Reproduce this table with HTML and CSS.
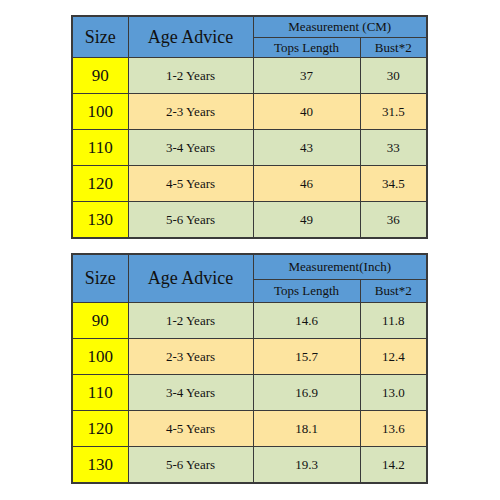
FILE: index.html
```html
<!DOCTYPE html>
<html lang="en">
  <head>
    <meta charset="UTF-8" />
    <title>Size Chart</title>
    <link rel="stylesheet" href="styles.css">
  </head>
  <body>
    <div class="container">
      <table class="chart cm">
        <colgroup>
          <col class="c-size"><col class="c-age"><col class="c-tops"><col class="c-bust">
        </colgroup>
        <tr class="head-top">
          <th rowspan="2" class="big">Size</th>
          <th rowspan="2" class="big">Age Advice</th>
          <th colspan="2">Measurement (CM)</th>
        </tr>
        <tr class="head-sub">
          <th>Tops Length</th>
          <th>Bust*2</th>
        </tr>
        <tr class="green"><td class="size">90</td><td>1-2 Years</td><td>37</td><td>30</td></tr>
        <tr class="orange"><td class="size">100</td><td>2-3 Years</td><td>40</td><td>31.5</td></tr>
        <tr class="green"><td class="size">110</td><td>3-4 Years</td><td>43</td><td>33</td></tr>
        <tr class="orange"><td class="size">120</td><td>4-5 Years</td><td>46</td><td>34.5</td></tr>
        <tr class="green"><td class="size">130</td><td>5-6 Years</td><td>49</td><td>36</td></tr>
      </table>

      <table class="chart inch">
        <colgroup>
          <col class="c-size"><col class="c-age"><col class="c-tops"><col class="c-bust">
        </colgroup>
        <tr class="head-top">
          <th rowspan="2" class="big">Size</th>
          <th rowspan="2" class="big">Age Advice</th>
          <th colspan="2">Measurement(Inch)</th>
        </tr>
        <tr class="head-sub">
          <th>Tops Length</th>
          <th>Bust*2</th>
        </tr>
        <tr class="green"><td class="size">90</td><td>1-2 Years</td><td>14.6</td><td>11.8</td></tr>
        <tr class="orange"><td class="size">100</td><td>2-3 Years</td><td>15.7</td><td>12.4</td></tr>
        <tr class="green"><td class="size">110</td><td>3-4 Years</td><td>16.9</td><td>13.0</td></tr>
        <tr class="orange"><td class="size">120</td><td>4-5 Years</td><td>18.1</td><td>13.6</td></tr>
        <tr class="green"><td class="size">130</td><td>5-6 Years</td><td>19.3</td><td>14.2</td></tr>
      </table>
    </div>
  </body>
</html>
```

FILE: styles.css
```css
body {
  margin: 0;
  background: #ffffff;
  font-family: "Liberation Serif", "Times New Roman", serif;
  color: #111111;
}
.container {
  padding: 15px 0 0 71px;
}
.chart {
  border-collapse: collapse;
  table-layout: fixed;
  width: 357px;
  border: 2px solid #3a3a3a;
}
.chart.inch {
  margin-top: 14px;
}
.c-size { width: 56px; }
.c-age { width: 125px; }
.c-tops { width: 107px; }
.chart th,
.chart td {
  border: 1px solid #3a3a3a;
  padding: 0;
  text-align: center;
  font-weight: normal;
}
.chart th {
  background: #5b9bd5;
  font-size: 13px;
}
.chart th.big {
  font-size: 18px;
}
.chart td {
  height: 35px;
  font-size: 13px;
}
.chart tr.green td {
  background: #d8e4bd;
}
.chart tr.orange td {
  background: #fde49f;
}
.chart tr td.size {
  background: #ffff00;
  font-size: 17px;
}
.cm .head-top th { height: 20px; }
.cm .head-sub th { height: 19px; }
.inch .head-top th { height: 24px; }
.inch .head-sub th { height: 22px; }
```
